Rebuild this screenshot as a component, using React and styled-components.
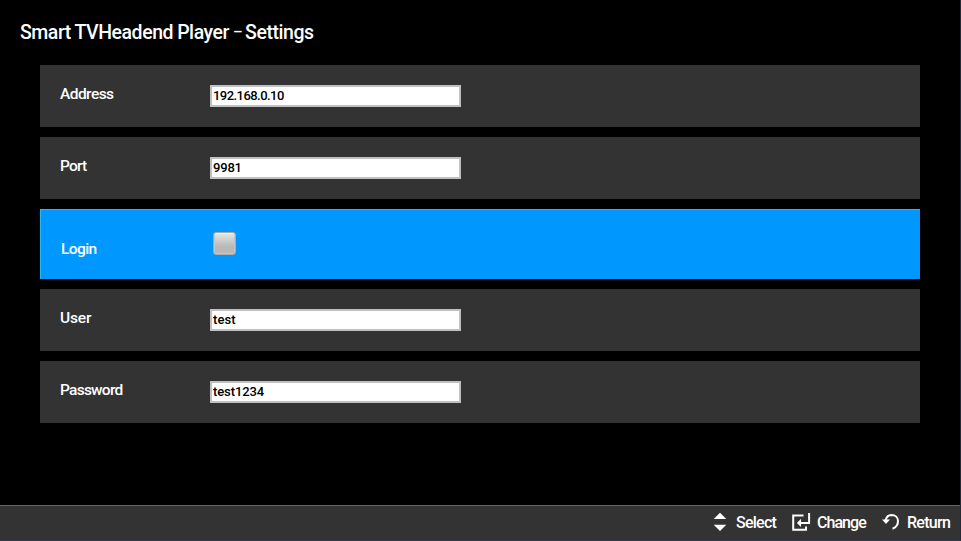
import React from 'react';
import styled, { createGlobalStyle } from 'styled-components';

const GlobalStyle = createGlobalStyle`
  * { box-sizing: border-box; }
  body { margin: 0; background: #000; overflow: hidden; }
`;

const Screen = styled.div`
  width: 961px;
  height: 541px;
  display: flex;
  flex-direction: column;
  background: #000;
  color: #fff;
  font-family: Roboto, 'Liberation Sans', sans-serif;
  font-weight: 500;
  border-right: 1px solid #252a38;
  border-bottom: 1px solid #343b48;
`;

const Title = styled.h1`
  margin: 0;
  height: 65px;
  padding: 21px 0 0 20px;
  font-size: 19.5px;
  line-height: 24px;
  font-weight: 500;
  letter-spacing: -0.46px;
  word-spacing: -0.3px;
  white-space: nowrap;
`;

const Dash = styled.span`
  display: inline-block;
  width: 8px;
  height: 2px;
  overflow: visible;
  font-size: 15px;
  line-height: 2px;
  vertical-align: 2px;
`;

const Settings = styled.main`
  flex: 1;
  display: flex;
  flex-direction: column;
  gap: 10px;
  padding: 0 40px;
`;

const Row = styled.label`
  display: flex;
  align-items: flex-start;
  width: 880px;
  height: ${(p) => (p.$active ? 70 : 62)}px;
  padding: ${(p) => (p.$active ? '22px 0 0 20px' : '20px 0 0 20px')};
  background: ${(p) => (p.$active ? '#0098ff' : '#333')};
  border: ${(p) => (p.$active ? '1px solid #28b9f5' : '0')};
  border-width: ${(p) => (p.$active ? '1px 0 0 1px' : '0')};
`;

const Label = styled.span`
  width: 150px;
  margin-top: ${(p) => (p.$active ? 7 : -1)}px;
  font-size: 15.5px;
  line-height: 20px;
  letter-spacing: ${(p) => p.$track}px;
`;

const Field = styled.input`
  width: 251px;
  height: 22px;
  padding: 0 0 1px 1px;
  border: 2px solid #c0c0c0;
  border-radius: 0;
  outline: 0;
  background: #fff;
  color: #000;
  font: 500 13px Roboto, 'Liberation Sans', sans-serif;
  letter-spacing: ${(p) => p.$track}px;
`;

const Checkbox = styled.input`
  appearance: none;
  width: 23px;
  height: 23px;
  margin: 0 0 0 2px;
  border: 1px solid #aaa9a8;
  border-radius: 3px;
  background: linear-gradient(#e6e6e6, #b8b8b8 65%, #b8b8b8);
  box-shadow: inset 0 1px #ededed, inset 0 0 0 1px #c6c6c6;
`;

const HelpBar = styled.footer`
  height: 35px;
  display: flex;
  justify-content: flex-end;
  align-items: center;
  padding: 0 10px 2px 0;
  background: #333;
  border-top: 1px solid #686668;
`;

const Hint = styled.div`
  display: flex;
  align-items: center;
  width: ${(p) => p.$width}px;
  height: 100%;
  font-size: 16px;
  letter-spacing: ${(p) => p.$track}px;
  white-space: nowrap;

  svg { flex: none; margin-right: ${(p) => p.$gap}px; }
`;

const SelectIcon = () => (
  <svg width="14" height="20" viewBox="0 0 14 20" fill="#fff">
    <path d="M7 .7 13.3 7H.7ZM.7 12.8h12.6L7 19Z" />
  </svg>
);

const ChangeIcon = () => (
  <svg width="19" height="20" viewBox="0 0 19 20" fill="none" stroke="#fff" strokeWidth="2">
    <path d="M11.5 3.6H1.2v14.2H14v-3.3M17.1 1v9.9H8" />
    <path d="M9 6.8v8.2L4.9 10.9Z" fill="#fff" stroke="none" />
  </svg>
);

const ReturnIcon = () => (
  <svg width="18" height="18" viewBox="0 0 18 18" fill="none">
    <path d="M3.7 7.2C4.3 4 6.5 2.1 9.5 2c3.8 0 6.5 2.5 6.5 6 0 3.6-2.1 6.6-5.5 7.7" stroke="#fff" strokeWidth="2" />
    <path d="M0 6.6h8L4 11Z" fill="#fff" />
  </svg>
);

const fields = [
  { label: 'Address', value: '192.168.0.10', track: -0.55, valueTrack: -0.55 },
  { label: 'Port', value: '9981', track: -0.8, valueTrack: -0.2 },
  { label: 'Login', active: true, track: -0.6 },
  { label: 'User', value: 'test', track: -0.15, valueTrack: 0.1 },
  { label: 'Password', value: 'test1234', track: -0.75, valueTrack: -0.1 },
];

export default function App() {
  return (
    <Screen>
      <GlobalStyle />
      <Title>Smart TVHeadend Player <Dash>–</Dash> Settings</Title>
      <Settings>
        {fields.map((f) => (
          <Row key={f.label} $active={f.active}>
            <Label $active={f.active} $track={f.track}>{f.label}</Label>
            {f.active
              ? <Checkbox type="checkbox" />
              : <Field type="text" defaultValue={f.value} spellCheck={false} $track={f.valueTrack} />}
          </Row>
        ))}
      </Settings>
      <HelpBar>
        <Hint $width={79} $gap={9} $track={-0.75}><SelectIcon />Select</Hint>
        <Hint $width={90} $gap={6} $track={-0.95}><ChangeIcon />Change</Hint>
        <Hint $width={68} $gap={7} $track={-0.7}><ReturnIcon />Return</Hint>
      </HelpBar>
    </Screen>
  );
}
